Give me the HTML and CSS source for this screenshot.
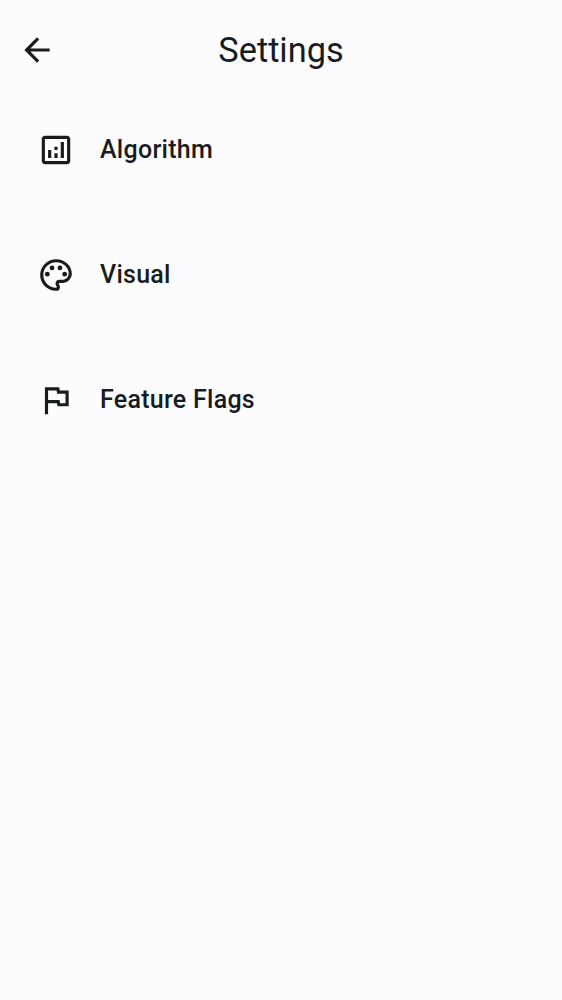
FILE: index.html
```html
<!DOCTYPE html>
<html lang="en">
<head>
<meta charset="utf-8">
<title>Settings</title>
<link rel="stylesheet" href="styles.css">
</head>
<body>
<header class="app-bar">
  <button class="back" aria-label="Back">
    <svg class="icon" viewBox="0 0 24 24"><path d="M20 11H7.83l5.59-5.59L12 4l-8 8 8 8 1.41-1.41L7.83 13H20v-2z"/></svg>
  </button>
  <h1 class="title">Settings</h1>
</header>
<main class="list">
  <a class="item">
    <svg class="icon" viewBox="0 0 24 24"><path fill-rule="evenodd" d="M19 3H5c-1.1 0-2 .9-2 2v14c0 1.1.9 2 2 2h14c1.1 0 2-.9 2-2V5c0-1.1-.9-2-2-2zm0 16H5V5h14v14z"/><path d="M7 12h2v5H7zM15 7h2v10h-2zM11 14h2v3h-2zM11 10h2v2h-2z"/></svg>
    <span class="label">Algorithm</span>
  </a>
  <a class="item">
    <svg class="icon" viewBox="0 0 24 24"><path d="M12 22C6.49 22 2 17.51 2 12S6.49 2 12 2s10 4.04 10 9c0 3.31-2.69 6-6 6h-1.77c-.28 0-.5.22-.5.5 0 .12.05.23.13.33.41.47.64 1.06.64 1.67A2.5 2.5 0 0 1 12 22zm0-18c-4.41 0-8 3.59-8 8s3.59 8 8 8c.28 0 .5-.22.5-.5a.54.54 0 0 0-.14-.35c-.41-.46-.63-1.05-.63-1.65a2.5 2.5 0 0 1 2.5-2.5H16c2.21 0 4-1.79 4-4 0-3.86-3.59-7-8-7z"/><circle cx="6.5" cy="11.5" r="1.5"/><circle cx="9.5" cy="7.5" r="1.5"/><circle cx="14.5" cy="7.5" r="1.5"/><circle cx="17.5" cy="11.5" r="1.5"/></svg>
    <span class="label">Visual</span>
  </a>
  <a class="item">
    <svg class="icon" viewBox="0 0 24 24"><path d="M12.36 6l.4 2H18v6h-3.36l-.4-2H7V6h5.36M14 4H5v17h2v-7h5.6l.4 2h7V6h-5.6L14 4z"/></svg>
    <span class="label">Feature Flags</span>
  </a>
</main>
</body>
</html>
```
FILE: styles.css
```css
* { box-sizing: border-box; }
body {
  margin: 0;
  min-height: 1000px;
  background: #fcfcff;
  color: #191c1e;
  font-family: Roboto, sans-serif;
}
.app-bar {
  display: grid;
  grid-template-columns: 75px 1fr 75px;
  align-items: center;
  height: 100px;
}
.back {
  display: flex;
  padding: 0 0 0 18px;
  border: 0;
  background: none;
  color: inherit;
}
.icon {
  flex: none;
  width: 38px;
  height: 38px;
  fill: currentColor;
}
.title {
  margin: 0;
  text-align: center;
  font-size: 34.375px;
  font-weight: 400;
  line-height: 44px;
}
.list { display: flex; flex-direction: column; gap: 25px; }
.item {
  display: flex;
  align-items: center;
  gap: 25px;
  height: 100px;
  padding: 0 37px;
}
.label {
  font-size: 25px;
  font-weight: 500;
  line-height: 38px;
  letter-spacing: 0.27px;
}
```
